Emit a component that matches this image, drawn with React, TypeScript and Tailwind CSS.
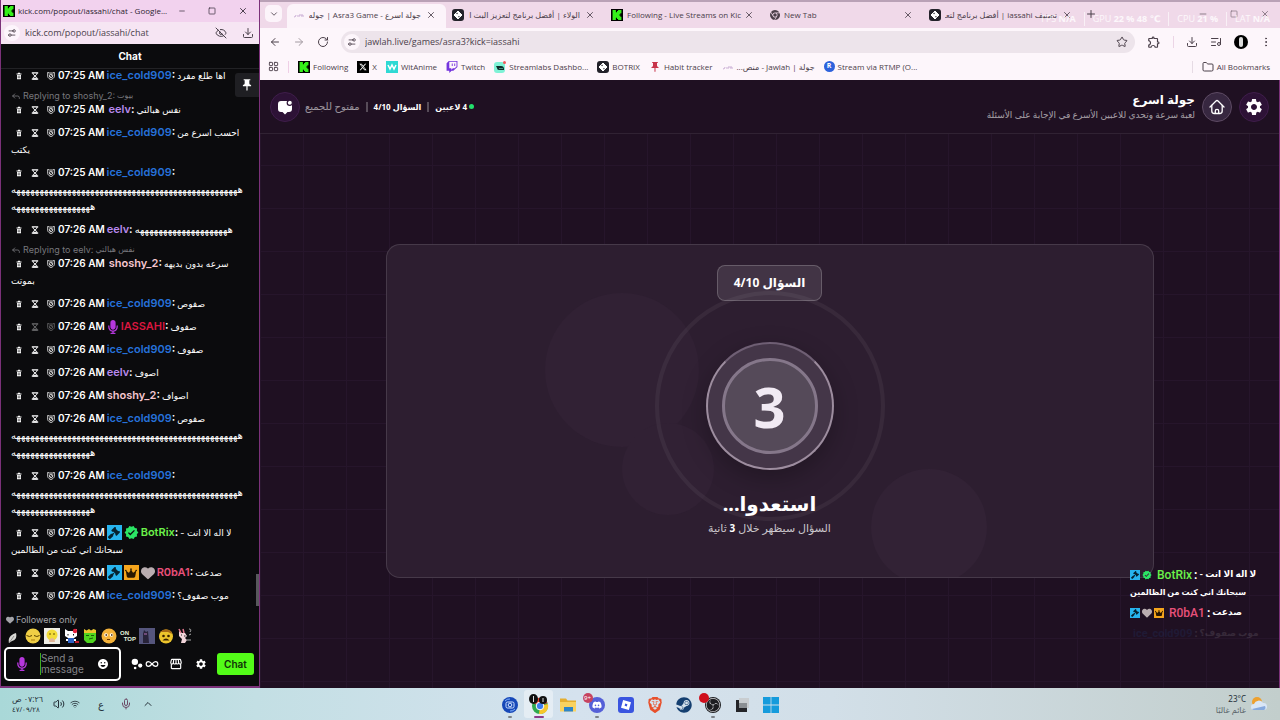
import type { ReactNode } from "react";
import clsx from "clsx";
import {
  ArrowLeft,
  ArrowRight,
  ChevronDown,
  ChevronUp,
  Download,
  EllipsisVertical,
  EyeOff,
  Folder,
  Infinity as InfinityIcon,
  LayoutGrid,
  ListMusic,
  Mic,
  Minus,
  Plus,
  Reply,
  RotateCw,
  Settings2,
  Square,
  Star,
  Volume2,
  Wifi,
  X,
} from "lucide-react";
import { FaChrome, FaDiscord, FaSteam, FaTwitch, FaXTwitter, FaBrave, FaMicrophone, FaCrown, FaGavel, FaHeart } from "react-icons/fa6";
import { MdSettings, MdStorefront, MdVerified, MdPushPin, MdEmojiEmotions, MdBubbleChart, MdOutlineExtension } from "react-icons/md";
import { SiKick, SiObsstudio, SiRoblox } from "react-icons/si";

type Badge = "mod" | "verified" | "crown" | "heart" | "mic";

interface Message {
  time: string;
  name: string;
  color: string;
  lines: string[];
  reply?: { to: string; text: string };
  badges?: Badge[];
  own?: boolean;
}

const laugh = (n: number) => "ه".repeat(n);

const blue = "text-[#2671d9]";
const purple = "text-[#b98aee]";
const pink = "text-[#f5c6cf]";

const messages: Message[] = [
  { time: "07:25 AM", name: "ice_cold909", color: blue, lines: ["اها طلع مفرد"] },
  { time: "07:25 AM", name: "eelv", color: purple, lines: ["نفس هبالتي"], reply: { to: "shoshy_2", text: "بيوت" } },
  { time: "07:25 AM", name: "ice_cold909", color: blue, lines: ["احسب اسرع من", "يكتب"] },
  { time: "07:25 AM", name: "ice_cold909", color: blue, lines: ["", laugh(50), laugh(18)] },
  { time: "07:26 AM", name: "eelv", color: purple, lines: [laugh(21)] },
  { time: "07:26 AM", name: "shoshy_2", color: pink, lines: ["سرعه بدون بديهه", "بموتت"], reply: { to: "eelv", text: "نفس هبالتي" } },
  { time: "07:26 AM", name: "ice_cold909", color: blue, lines: ["صفوص"] },
  { time: "07:26 AM", name: "IASSAHI", color: "text-[#d9163f]", lines: ["صفوف"], badges: ["mic"], own: true },
  { time: "07:26 AM", name: "ice_cold909", color: blue, lines: ["صفوف"] },
  { time: "07:26 AM", name: "eelv", color: purple, lines: ["اصوف"] },
  { time: "07:26 AM", name: "shoshy_2", color: pink, lines: ["اصواف"] },
  { time: "07:26 AM", name: "ice_cold909", color: blue, lines: ["صفوص", laugh(50), laugh(18)] },
  { time: "07:26 AM", name: "ice_cold909", color: blue, lines: ["", laugh(50), laugh(18)] },
  { time: "07:26 AM", name: "BotRix", color: "text-[#6bf24a]", lines: ["لا اله الا انت -", "سبحانك اني كنت من الظالمين"], badges: ["mod", "verified"] },
  { time: "07:26 AM", name: "R0bA1", color: "text-[#e8507a]", lines: ["صدعت"], badges: ["mod", "crown", "heart"] },
  { time: "07:26 AM", name: "ice_cold909", color: blue, lines: ["موب صفوف؟"] },
];

/* ---------- small drawings ---------- */

const TrashGlyph = () => (
  <svg viewBox="0 0 8 8" className="size-2" fill="currentColor">
    <path d="M3 .8h2v.7H3zM1.500 1.500h5v.9h-5zM2 2.900h4v4.300H2z" />
    <path d="M2.600 4.200h2.800M2.600 5.700h2.800" stroke="#0b0b0d" strokeWidth=".6" />
  </svg>
);

const HourglassGlyph = () => (
  <svg viewBox="0 0 8 8" className="size-2" fill="none" stroke="currentColor">
    <path d="M.8 .8h6.4M.8 7.2h6.4" strokeWidth="1.2" />
    <path d="M2 1v1.2L4 4 2 5.800V7h4V5.800L4 4l2-1.800V1" strokeWidth=".9" />
    <path d="M2.500 6.800 4 5.200l1.500 1.600z" fill="currentColor" stroke="none" />
  </svg>
);

const ShieldGlyph = () => (
  <svg viewBox="0 0 8 8" className="size-2" fill="none" stroke="currentColor">
    <path d="M.7 .3v4.200C.9 6 2.500 7 4 7.500 5.500 7 7.100 6 7.300 4.500V.3L5.800 1H2.200z" strokeWidth=".8" />
    <circle cx="4" cy="3.900" r="1.700" strokeWidth=".8" />
    <path d="m3 4.900 2-2" strokeWidth=".6" />
  </svg>
);

const BotrixIcon = () => (
  <span className="flex size-3 shrink-0 items-center justify-center rounded-[3px] bg-[#23222a]">
    <svg viewBox="0 0 10 10" className="size-2.5">
      <path d="M5 1 9 5 5 9 1 5z" fill="#fff" stroke="#fff" strokeLinejoin="round" />
      <path d="m3.600 3 .9.900M5.500 6.300l.9.900" stroke="#23222a" strokeWidth="1.200" />
    </svg>
  </span>
);

const KickIcon = () => (
  <span className="flex size-3 shrink-0 items-center justify-center bg-black text-[#35f01a]">
    <SiKick className="size-2.5" />
  </span>
);

const SiteIcon = ({ className }: { className?: string }) => <Settings2 className={clsx("-scale-x-100", className)} />;

const BadgeIcon = ({ kind, small }: { kind: Badge; small?: boolean }) => {
  const box = clsx("flex shrink-0 items-center justify-center", small ? "size-2.5" : "size-[15px]");
  const inner = small ? "size-2" : "size-3";
  if (kind === "mod")
    return (
      <span className={clsx(box, "bg-[#27b4ee] text-[#06222f]")}>
        <FaGavel className={inner} />
      </span>
    );
  if (kind === "crown")
    return (
      <span className={clsx(box, "bg-[#f5a51c] text-[#2a1700]")}>
        <FaCrown className={inner} />
      </span>
    );
  if (kind === "verified") return <MdVerified className={clsx(box, "text-[#2be565]")} />;
  if (kind === "heart") return <FaHeart className={clsx(small ? "size-2.5" : "size-3.5", "shrink-0 text-[#b9adb0]")} />;
  return <FaMicrophone className="h-3.5 w-3 shrink-0 text-[#b637dd]" />;
};

/* ---------- chat window ---------- */

const arabicSize = (text: string) => (text.startsWith("هه") ? "text-[10px]" : "text-[9px]");

const ChatMessage = ({ message }: { message: Message }) => {
  const [first, ...rest] = message.lines;
  return (
    <li className="py-[3px] pl-[9px] text-white">
      {message.reply && (
        <div className="flex h-[11px] items-center gap-[2px] text-[9px] leading-[11px] text-[#77777c]">
          <Reply className="size-2.5" />
          <span>Replying to {message.reply.to}:</span>
          <span dir="rtl" className="text-[8px]">{message.reply.text}</span>
        </div>
      )}
      <div className="flex h-[17px] items-center whitespace-nowrap">
        <span className="flex gap-2 pr-[3px] pl-1">
          <button type="button" aria-label="Delete"><TrashGlyph /></button>
          <button type="button" aria-label="Timeout" className={clsx(message.own && "opacity-40")}><HourglassGlyph /></button>
          <button type="button" aria-label="Ban" className={clsx(message.own && "opacity-40")}><ShieldGlyph /></button>
        </span>
        <time className="text-[10px] font-semibold">{message.time}</time>
        <span className={clsx("flex items-center gap-[2px]", message.reply ? "pl-1" : "pl-[2px]")}>
          {message.badges?.map((b) => <BadgeIcon key={b} kind={b} />)}
          <span className="text-[11px] font-semibold">
            <span className={message.color}>{message.name}</span>:
          </span>
        </span>
        {first && <span dir="rtl" className={clsx("pl-[2px]", arabicSize(first))}>{first}</span>}
      </div>
      {rest.map((line, i) => (
        <div key={i} className="flex h-[17px] items-center whitespace-nowrap">
          <span dir="rtl" className={arabicSize(line)}>{line}</span>
        </div>
      ))}
    </li>
  );
};

const Emotes = () => (
  <div className="flex h-[18px] items-center gap-[3px] pl-[5px]">
    <svg viewBox="0 0 16 16" className="size-4"><path d="M3 15c-1-5 1-8 7-10 1 4 0 7-4 8z" fill="#d8d8d4" /><path d="m3 15 5-7" stroke="#8d8d8d" /></svg>
    <svg viewBox="0 0 16 16" className="size-4"><circle cx="8" cy="8" r="7.500" fill="#f0cf45" /><path d="M1.500 7.500q3 2 5.500 0M9 7.500q3 2 5.500 0" stroke="#5b4300" fill="none" /><path d="M6 12h4" stroke="#a97a12" /></svg>
    <svg viewBox="0 0 16 16" className="size-4"><path d="M0 0h16v16H0z" fill="#efeee6" /><circle cx="8" cy="7" r="5.500" fill="#f2dc3a" /><path d="M5 6h2M9 6h2" stroke="#6b5200" /><path d="M5 14c0-3 2-4 3-4s3 1 3 4z" fill="#e3b79a" /></svg>
    <svg viewBox="0 0 16 16" className="size-4"><path d="M2 1l3 2h6l3-2v7l-3 2H5L2 8z" fill="#fff" /><circle cx="12" cy="3" r="2.200" fill="#e4203c" /><path d="M5 6v1.500M10.500 6v1.500" stroke="#111" /><path d="M5 10h6v5H5z" fill="#2d62c4" /><path d="M3 11h2v2H3zM11 11h2v2h-2z" fill="#fff" /><path d="M12 13h4v2h-4z" fill="#c01c2c" /></svg>
    <svg viewBox="0 0 16 16" className="size-4"><path d="M2 3h12v9l-3 3H5l-3-3z" fill="#4fd51f" /><path d="M2 1l2.500 1.500L7 1l2 1.500L11.500 1 14 2v3H2z" fill="#e8c62c" /><path d="M4 7.500h3M9 7.500h3M7 11l4-1" stroke="#17610a" /></svg>
    <svg viewBox="0 0 16 16" className="size-4"><circle cx="8" cy="8" r="7.500" fill="#f3b13a" /><circle cx="5" cy="7" r="1.800" fill="#fff" /><circle cx="10.500" cy="7" r="1.800" fill="#fff" /><path d="M4.500 7h1.500M10 7h1.500" stroke="#3b1d00" strokeWidth="1.500" /><path d="M6 11.500h3" stroke="#6b3400" /></svg>
    <span className="flex w-4 flex-col font-['Liberation_Sans',sans-serif] text-[6px] leading-[6px] font-bold text-[#e6f5df]">
      <span>ON</span>
      <span className="self-end">TOP</span>
    </span>
    <svg viewBox="0 0 16 16" className="size-4"><path d="M0 0h16v16H0z" fill="#55557c" /><path d="M4 15V6l1-4 2 2 2-1 1 12z" fill="#282339" /><path d="M5 6h3" stroke="#b874bb" /></svg>
    <svg viewBox="0 0 16 16" className="size-4"><circle cx="8" cy="8.500" r="7" fill="#edc52c" /><path d="M2 4q5-5 11-1l1 3-4-2z" fill="#a76b16" /><circle cx="5.500" cy="8" r="1.300" fill="#3a2200" /><circle cx="10.500" cy="8" r="1.300" fill="#3a2200" /><path d="M4.500 12.500q3.500-4 7 0z" fill="#3a2200" /></svg>
    <svg viewBox="0 0 16 16" className="size-4"><path d="M2 3l3 2h3l2 3-2 2 2 2-2 3H4l1-4-3-3z" fill="#f2d5da" /><path d="M2 1l2 4M6 1l1 4" stroke="#e2778e" strokeWidth="1.500" /><path d="M4 7h1M7 8h1.500" stroke="#222" /><path d="M12 1q3 0 1 3M12 7l2-1M10 12h4" stroke="#aaa" fill="none" /></svg>
  </div>
);

const ChatWindow = () => (
  <section className="relative flex w-[260px] shrink-0 flex-col border-x border-b-2 border-[#7b3179] bg-[#0b0b0d] font-['Inter','DejaVu_Sans',sans-serif]">
    <div className="flex h-[22px] shrink-0 items-center bg-[#f2d2ee] pl-[2px] font-['Open_Sans','DejaVu_Sans',sans-serif] text-[#2c2230]">
      <KickIcon />
      <span className="grow pl-[3px] text-[8px] whitespace-nowrap">kick.com/popout/iassahi/chat - Google...</span>
      <div className="flex items-center gap-[22px] pr-[11px]">
        <button type="button" aria-label="Minimize"><Minus className="size-2" /></button>
        <button type="button" aria-label="Maximize"><Square className="size-2" /></button>
        <button type="button" aria-label="Close"><X className="size-2.5" /></button>
      </div>
    </div>
    <div className="flex h-[22px] shrink-0 items-center bg-[#f6e5f3] pr-[5px] pl-[3px] font-['Open_Sans','DejaVu_Sans',sans-serif] text-[#4a414b]">
      <span className="flex size-4 items-center justify-center rounded-full bg-[#fdf5fc]"><SiteIcon className="size-2.5" /></span>
      <span className="grow pl-[5px] text-[9px]">kick.com/popout/iassahi/chat</span>
      <EyeOff className="mr-[15px] size-3" />
      <Download className="size-3" />
    </div>
    <h2 className="flex h-[25px] shrink-0 items-center justify-center border-b border-[#222225] text-[10px] font-bold text-white">Chat</h2>
    <ul className="flex min-h-0 grow flex-col justify-end overflow-hidden pb-[6px] pl-px">
      {messages.map((m, i) => <ChatMessage key={i} message={m} />)}
    </ul>
    <div className="flex h-[14px] shrink-0 items-center gap-[2px] pl-[5px] text-[9px] text-[#a4a4a9]">
      <FaHeart className="size-2" />
      Followers only
    </div>
    <Emotes />
    <div className="flex shrink-0 items-center pt-[2px] pr-[5px] pb-[5px] pl-[3px] text-white">
      <label className="flex h-[34px] w-[117px] items-center rounded-[5px] border-2 border-white px-2.5">
        <FaMicrophone className="h-3.5 w-3 shrink-0 text-[#b637dd]" />
        <textarea
          aria-label="Send a message"
          rows={2}
          placeholder="Send a message"
          className="ml-3 h-[22px] min-w-0 grow resize-none overflow-hidden border-l border-[#3fae1f] text-[10px] leading-[11px] placeholder:text-[#85858a]"
        />
        <MdEmojiEmotions className="size-3 shrink-0" />
      </label>
      <MdBubbleChart className="ml-2 size-4 -scale-x-100" />
      <InfinityIcon className="size-3.5" />
      <MdStorefront className="ml-2.5 size-3.5" />
      <MdSettings className="ml-3 size-3" />
      <button type="button" className="ml-auto h-[22px] w-[37px] rounded-[3px] bg-[#53fc18] text-[10px] font-semibold text-[#103008]">Chat</button>
    </div>
    <button type="button" aria-label="Pinned message" className="absolute top-[73px] right-0 flex size-6 items-center justify-center rounded-l-[3px] bg-[#1f1f23] text-white">
      <MdPushPin className="size-3.5" />
    </button>
    <span className="absolute right-0 bottom-20 h-8 w-[3px] bg-[#58585c]" />
  </section>
);

/* ---------- browser chrome ---------- */

interface TabProps {
  icon: ReactNode;
  title: string;
  active?: boolean;
  rtl?: boolean;
}

const Tab = ({ icon, title, active, rtl }: TabProps) => (
  <div
    className={clsx(
      "flex h-6 max-w-[159px] min-w-0 flex-1 items-center self-end pr-2.5 pb-[3px] pl-1.5 text-[8px] text-[#4b404a]",
      active && "rounded-t-[6px] bg-[#fcf4fa]",
    )}
  >
    {icon}
    <span dir={rtl ? "rtl" : "ltr"} className={clsx("ml-1 grow overflow-hidden whitespace-nowrap", rtl && "mr-[5px]")}>{title}</span>
    <button type="button" aria-label="Close tab"><X className="size-2.5" /></button>
  </div>
);

const Bookmark = ({ icon, label, rtl }: { icon: ReactNode; label: string; rtl?: boolean }) => (
  <a href="#" className="flex items-center gap-[3px] whitespace-nowrap">
    {icon}
    <span dir={rtl ? "rtl" : "ltr"}>{label}</span>
  </a>
);

const JawlahIcon = () => (
  <svg viewBox="0 0 12 8" className="h-2 w-3 shrink-0" fill="none" stroke="#c9add4">
    <path d="M1 6q2 0 2-2M4 5h3V3M8 5h3M9 3v2" />
  </svg>
);

const BrowserChrome = () => (
  <div className="relative shrink-0 border-t-2 border-[#b9a1b6] bg-[#f0d9e9] font-['Open_Sans','DejaVu_Sans',sans-serif] text-[#4b404a]">
    <div className="flex h-[26px] items-center pl-[5px]">
      <button type="button" aria-label="Search tabs" className="mr-[5px] mb-[3px] flex size-[17px] items-center justify-center rounded-[5px] bg-[#fcf4fa]">
        <ChevronDown className="size-2.5" />
      </button>
      <Tab active rtl icon={<JawlahIcon />} title="جولة اسرع - Asra3 Game | جوله" />
      <Tab rtl icon={<BotrixIcon />} title="الولاء | أفضل برنامج لتعزيز البث ا" />
      <Tab icon={<KickIcon />} title="Following - Live Streams on Kic" />
      <Tab icon={<FaChrome className="size-2.5 shrink-0" />} title="New Tab" />
      <Tab rtl icon={<BotrixIcon />} title="تصنيف iassahi | أفضل برنامج لتعـ" />
      <button type="button" aria-label="New tab" className="mb-[3px] ml-[3px]"><Plus className="size-3" /></button>
      <div className="mb-[3px] ml-auto flex items-center gap-[22px] pr-2.5 opacity-70">
        <Minus className="size-2.5" />
        <Square className="size-2" />
        <X className="size-2.5" />
      </div>
    </div>
    <div className="absolute top-2.5 right-2.5 flex gap-2 text-[9px] leading-[14px] font-bold text-white/80">
      <span><span className="font-normal">FPS</span> N/A</span>
      <span className="border-l border-white/60 pl-2"><span className="font-normal">GPU</span> 22 % 48 ℃</span>
      <span className="border-l border-white/60 pl-2"><span className="font-normal">CPU</span> 21 %</span>
      <span className="border-l border-white/60 pl-2"><span className="font-normal">LAT</span> N/A</span>
    </div>
    <div className="flex h-[28px] items-center bg-[#fdf6fb] pr-2 pl-[9px]">
      <div className="flex gap-3">
        <ArrowLeft className="size-3" />
        <ArrowRight className="size-3 opacity-50" />
        <RotateCw className="size-3" />
      </div>
      <div className="mr-3 ml-3 flex h-[22px] grow items-center rounded-full bg-[#ede4eb] px-[3px]">
        <span className="flex size-4 items-center justify-center rounded-full bg-[#fdf6fb]"><SiteIcon className="size-2.5" /></span>
        <input aria-label="Address" defaultValue="jawlah.live/games/asra3?kick=iassahi" className="ml-[5px] min-w-0 grow text-[9px] outline-none" />
        <Star className="mr-1 size-3" />
      </div>
      <div className="flex items-center gap-3">
        <MdOutlineExtension className="size-3.5" />
        <span className="h-3 w-px bg-[#ecd5e6]" />
        <Download className="size-3" />
        <ListMusic className="size-3" />
        <span className="flex size-3.5 items-center justify-center rounded-full bg-black"><span className="h-2.5 w-1 rounded-full bg-[#ddd]" /></span>
        <EllipsisVertical className="size-3" />
      </div>
    </div>
    <nav className="flex h-6 items-center gap-[9px] bg-[#fdf6fb] pr-2.5 pb-[3px] pl-2 text-[8px]">
      <LayoutGrid className="size-[11px]" />
      <span className="h-3 w-px bg-[#efcfe6]" />
      <Bookmark icon={<KickIcon />} label="Following" />
      <Bookmark icon={<span className="flex size-3 items-center justify-center bg-black text-white"><FaXTwitter className="size-2" /></span>} label="X" />
      <Bookmark
        icon={
          <svg viewBox="0 0 12 12" className="size-3"><path d="M0 0h12v12H0z" fill="#2fd9d4" /><path d="m2 4 2 4 2-4 2 4 2-4" fill="none" stroke="#fff" strokeWidth="1.500" /></svg>
        }
        label="WitAnime"
      />
      <Bookmark icon={<FaTwitch className="size-3 text-[#7434dd]" />} label="Twitch" />
      <Bookmark
        icon={
          <svg viewBox="0 0 12 12" className="size-3"><rect y="1" width="11" height="11" rx="3" fill="#7ff2d6" /><path d="M2 5h5q3 0 3 3v1H5Q3 9 3 7z" fill="#0d2b29" /><path d="M6 7v1M8 7v1" stroke="#7ff2d6" /><circle cx="10.500" cy="1.500" r="1.500" fill="#ef5a5a" /></svg>
        }
        label="Streamlabs Dashbo..."
      />
      <Bookmark icon={<BotrixIcon />} label="BOTRIX" />
      <Bookmark icon={<MdPushPin className="size-3 text-[#c8344b]" />} label="Habit tracker" />
      <Bookmark rtl icon={<JawlahIcon />} label="جولة | Jawlah - منص..." />
      <Bookmark icon={<span className="flex size-[11px] items-center justify-center rounded-full bg-[#2d62dc] text-[7px] font-bold text-white">R</span>} label="Stream via RTMP (O..." />
      <span className="ml-auto h-3 w-px bg-[#e6dbe4]" />
      <Bookmark icon={<Folder className="size-3" />} label="All Bookmarks" />
    </nav>
  </div>
);

/* ---------- game page ---------- */

const GameHeader = () => (
  <header className="flex h-[54px] shrink-0 items-center justify-between border-b border-white/8 px-2.5 text-white">
    <div className="flex items-center">
      <button type="button" aria-label="Chat" className="flex size-[30px] items-center justify-center rounded-full border border-[#3f1d4b] bg-[#2d1236]">
        <svg viewBox="0 0 16 16" className="size-4">
          <path d="M4 2h8a3 3 0 0 1 3 3v5a3 3 0 0 1-3 3h-1.500L8 15.500 5.500 13H4a3 3 0 0 1-3-3V5a3 3 0 0 1 3-3z" fill="#fff" />
          <circle cx="12.800" cy="3.800" r="2.600" fill="#fff" stroke="#2d1236" strokeWidth="1.200" />
        </svg>
      </button>
      <div className="flex items-center gap-1.5 pl-[5px] text-[8px]">
        <span dir="rtl" className="text-[10px] text-white/55">مفتوح للجميع</span>
        <span className="h-2.5 w-[2px] bg-white/25" />
        <span dir="rtl" className="font-bold">السؤال 4/10</span>
        <span className="h-2.5 w-[2px] bg-white/25" />
        <span dir="rtl" className="font-bold">4 لاعبين</span>
        <span className="-ml-1 size-[5px] rounded-full bg-[#22e06c]" />
      </div>
    </div>
    <div className="flex items-center gap-[7px]">
      <div dir="rtl">
        <h1 className="text-[12px] leading-4 font-bold">جولة اسرع</h1>
        <p className="text-[9px] leading-[14px] text-white/60">لعبة سرعة وتحدي للاعبين الأسرع في الإجابة على الأسئلة</p>
      </div>
      <button type="button" aria-label="Home" className="flex size-[30px] items-center justify-center rounded-full border border-[#5d4a63] bg-[#372740]">
        <svg viewBox="0 0 16 16" className="size-4" fill="none" stroke="#fff" strokeWidth="1.300" strokeLinecap="round" strokeLinejoin="round">
          <path d="M1 8 7 2q1-1 2 0l6 6" />
          <path d="M2.800 6.500V12q0 2.500 2.500 2.500h5.400q2.500 0 2.500-2.500V6.500" />
          <path d="M6.300 14v-2q0-1.700 1.700-1.700T9.700 12v2" />
        </svg>
      </button>
      <button type="button" aria-label="Settings" className="flex size-[30px] items-center justify-center rounded-full border border-[#3f1d4b] bg-[#2d1236]">
        <MdSettings className="size-5" />
      </button>
    </div>
  </header>
);

const Countdown = () => (
  <div className="relative flex w-full max-w-3xl flex-col items-center overflow-hidden rounded-[14px] border border-white/12 bg-[#2d1e30] pt-5 pb-9 text-white">
    <span className="absolute top-12 left-[158px] size-[154px] rounded-full bg-[#312134]" />
    <span className="absolute top-[178px] left-[235px] size-[92px] rounded-full bg-[#312134]" />
    <span className="absolute right-[166px] -bottom-[8px] size-[116px] rounded-full bg-[#322235]" />
    <div dir="rtl" className="flex h-9 items-center rounded-lg border border-white/20 bg-white/10 px-4 text-[12px] font-bold">السؤال 4/10</div>
    <div className="relative mt-[41px] flex size-32 items-center justify-center rounded-full border-2 border-[#9d8d9f] border-t-[#6f5f74] bg-[#443648] shadow-[0_8px_24px_rgba(0,0,0,0.25)]">
      <span className="absolute -inset-[53px] rounded-full border-4 border-white/5" />
      <div className="flex size-24 items-center justify-center rounded-full border-[3px] border-[#85778a] bg-[#554a59] font-['Noto_Sans',sans-serif] text-[56px] leading-none font-bold text-[#f1eaf3]">3</div>
    </div>
    <h2 dir="rtl" className="pt-5 text-[20px] leading-7 font-bold">استعدوا...</h2>
    <p dir="rtl" className="pb-[3px] text-[11px] leading-5 text-white/75">
      السؤال سيظهر خلال <b className="text-[10px] text-white">3</b> ثانية
    </p>
  </div>
);

const StreamChat = () => (
  <div className="absolute right-[7px] bottom-11 w-[142px] font-['Roboto','DejaVu_Sans',sans-serif] text-[12px] font-bold text-white">
    <div className="flex h-[18px] items-center gap-[2px] whitespace-nowrap">
      <BadgeIcon kind="mod" small />
      <BadgeIcon kind="verified" small />
      <span className="pl-[3px] font-medium text-[#6bf24a]">BotRix</span>
      <span>:</span>
      <span dir="rtl" className="text-[9px]">لا اله الا انت -</span>
    </div>
    <div className="flex h-[18px] items-center text-[8px] whitespace-nowrap"><span dir="rtl">سبحانك اني كنت من الظالمين</span></div>
    <div className="flex h-[22px] items-center gap-[2px] whitespace-nowrap">
      <BadgeIcon kind="mod" small />
      <BadgeIcon kind="heart" small />
      <BadgeIcon kind="crown" small />
      <span className="pl-[3px] font-medium text-[#e8507a]">R0bA1</span>
      <span>:</span>
      <span dir="rtl" className="text-[9px]">صدعت</span>
    </div>
    <div className="flex h-[20px] items-center gap-[2px] pl-[3px] text-[11px] whitespace-nowrap opacity-10">
      <span className="text-[#2671d9]">ice_cold909</span>
      <span>:</span>
      <span dir="rtl" className="text-[9px]">موب صفوف؟</span>
    </div>
  </div>
);

const GamePage = () => (
  <div className="relative flex min-h-0 grow flex-col border-r border-[#7b3179] bg-[#1f1022] font-['Noto_Sans','DejaVu_Sans',sans-serif]">
    <GameHeader />
    <main className="flex grow items-center justify-center bg-[linear-gradient(to_right,#26152b_1px,transparent_1px),linear-gradient(to_bottom,#26152b_1px,transparent_1px)] bg-[size:43px_43px] bg-[position:0_-12px]">
      <Countdown />
    </main>
    <StreamChat />
  </div>
);

/* ---------- taskbar ---------- */

const TaskIcon = ({ children, running }: { children: ReactNode; running?: boolean }) => (
  <button type="button" className="flex h-7 w-[29px] flex-col items-center justify-end gap-[3px]">
    <span className="flex size-4 items-center justify-center">{children}</span>
    <span className={clsx("h-[2px] w-1 rounded-full", running && "bg-[#7c8289]")} />
  </button>
);

const Taskbar = () => (
  <footer className="grid h-8 shrink-0 grid-cols-[1fr_auto_1fr] items-center bg-[linear-gradient(to_right,#a9d8d8,#c3dfe4_20%,#d5e2ee_45%,#d2dfe8_65%,#c2cecc)] font-['Noto_Sans','DejaVu_Sans',sans-serif] text-[#25313a]">
    <div className="flex items-center pl-3">
      <div dir="rtl" className="w-8 text-left text-[8px] leading-[11px] whitespace-nowrap">
        <div>٠٧:٢٦ ص</div>
        <div className="text-[7px]">٤٧/٠٩/٢٨</div>
      </div>
      <Volume2 className="ml-[9px] size-3" />
      <Wifi className="ml-[5px] size-2.5" />
      <span className="ml-[18px] text-[10px]">ع</span>
      <Mic className="ml-4 size-3 text-[#6d4a66]" />
      <ChevronUp className="ml-2.5 size-3" />
    </div>
    <div className="flex">
      <TaskIcon running>
        <svg viewBox="0 0 16 16" className="size-4"><circle cx="8" cy="8" r="8" fill="#1748b8" /><rect x="4" y="5" width="8" height="6" rx="1.500" fill="none" stroke="#cfe2ff" /><circle cx="8" cy="8" r="1.800" fill="none" stroke="#cfe2ff" /><path d="M3 4a6 6 0 0 1 5-2M13 12a6 6 0 0 1-5 2" stroke="#7fb1ff" fill="none" /></svg>
      </TaskIcon>
      <button type="button" className="flex h-7 w-[29px] flex-col items-center justify-end gap-[2px] rounded-[3px] bg-white/40">
        <svg viewBox="0 0 20 20" className="size-5">
          <circle cx="11" cy="12" r="8" fill="#2fa84f" />
          <path d="M11 12 3.500 9A8 8 0 0 1 18.500 9z" fill="#e2412e" />
          <path d="M11 12 18.900 10A8 8 0 0 1 10 20z" fill="#f7c62b" />
          <circle cx="11" cy="12" r="3.800" fill="#3b7df0" stroke="#fff" />
          <ellipse cx="4.500" cy="5" rx="4.500" ry="5" fill="#111" />
          <ellipse cx="14" cy="6" rx="4" ry="4" fill="#111" />
          <path d="M4.500 2v6M14 4v4" stroke="#ddd" />
        </svg>
        <span className="h-[2px] w-2.5 rounded-full bg-[#8d3a8b]" />
      </button>
      <TaskIcon>
        <svg viewBox="0 0 16 16" className="size-4"><path d="M0 1.500h6l1.500 2H16V14H0z" fill="#e5ae2f" /><path d="M0 5h16v9.500H0z" fill="#f8d260" /><path d="M4 10h9v4.500H4z" fill="#2c84c9" /></svg>
      </TaskIcon>
      <TaskIcon running>
        <span className="relative flex size-4 items-center justify-center rounded-full bg-[#5560d8] text-white">
          <FaDiscord className="size-2.5" />
          <span className="absolute -top-1 -left-1.5 flex size-2.5 items-center justify-center rounded-full bg-[#c64360] text-[6px]">9+</span>
        </span>
      </TaskIcon>
      <TaskIcon>
        <span className="flex size-4 items-center justify-center rounded-[3px] bg-[#3a55e0] text-white"><SiRoblox className="size-2.5" /></span>
      </TaskIcon>
      <TaskIcon><FaBrave className="size-4 text-[#e8502b]" /></TaskIcon>
      <TaskIcon><FaSteam className="size-4 text-[#153f70]" /></TaskIcon>
      <TaskIcon running>
        <span className="relative flex size-4 items-center justify-center rounded-full bg-[#1d1d20] text-[#d9d9dc]">
          <SiObsstudio className="size-3.5" />
          <span className="absolute -top-1 -left-1.5 size-2.5 rounded-full bg-[#cf0f1c]" />
        </span>
      </TaskIcon>
      <TaskIcon>
        <svg viewBox="0 0 16 16" className="size-4"><path d="M2 3h11v12H2z" fill="#242428" /><path d="M5 1h10v10H5z" fill="#c9cdd0" /><path d="M5 6h8v5H5z" fill="#8b8f93" /></svg>
      </TaskIcon>
      <TaskIcon>
        <svg viewBox="0 0 16 16" className="size-4" fill="#159bdc"><path d="M0 0h7.600v7.600H0zM8.400 0H16v7.600H8.400zM0 8.400h7.600V16H0zM8.400 8.400H16V16H8.400z" /></svg>
      </TaskIcon>
    </div>
    <div className="flex items-center justify-end gap-1 pr-3">
      <div className="text-right text-[8px] leading-[11px]">
        <div>23°C</div>
        <div dir="rtl" className="text-left text-[#5c676c]">غائم غالبًا</div>
      </div>
      <svg viewBox="0 0 18 16" className="h-4 w-[18px]"><circle cx="7" cy="6" r="5" fill="#eda02f" /><path d="M4 14a3 3 0 0 1 0-6 5 5 0 0 1 9-1 3.500 3.500 0 0 1 1 7z" fill="#d9e6f6" /><path d="M4 14a3 3 0 0 1-2-1l13-3a3 3 0 0 1-1 4z" fill="#86a9dd" /></svg>
    </div>
  </footer>
);

const App = () => {
  return (
    <div className="flex h-screen flex-col overflow-hidden bg-[#1d0f20]">
      <div className="flex min-h-0 grow">
        <ChatWindow />
        <div className="flex min-w-0 grow flex-col">
          <BrowserChrome />
          <GamePage />
        </div>
      </div>
      <Taskbar />
    </div>
  );
};

export default App;
